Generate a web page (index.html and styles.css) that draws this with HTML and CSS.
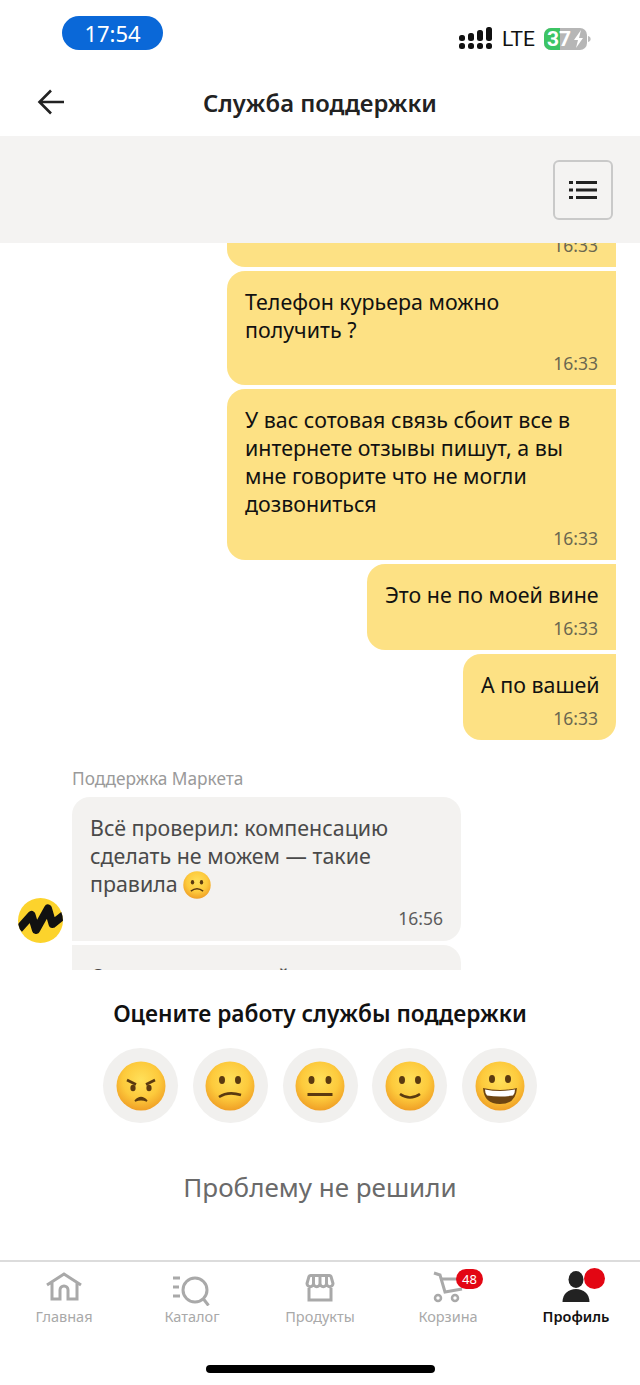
FILE: index.html
```html
<!DOCTYPE html>
<html lang="ru">
<head>
<meta charset="utf-8">
<title>Служба поддержки</title>
<link rel="stylesheet" href="styles.css">
</head>
<body>
<svg class="defs" width="0" height="0" aria-hidden="true">
  <defs>
    <radialGradient id="face" cx="50%" cy="38%" r="62%">
      <stop offset="0" stop-color="#ffe05a"/>
      <stop offset="0.6" stop-color="#fdca3c"/>
      <stop offset="1" stop-color="#f0a026"/>
    </radialGradient>
  </defs>
</svg>
<div class="app">
  <div class="status">
    <div class="time-pill">17:54</div>
    <div class="status-right">
      <svg class="signal" width="36" height="24" viewBox="0 0 36 24">
        <g fill="#111">
          <rect x="1" y="8" width="6" height="6" rx="2.5"/><rect x="1" y="16" width="6" height="6" rx="2.5"/>
          <rect x="10" y="6" width="6" height="8" rx="2.5"/><rect x="10" y="16" width="6" height="6" rx="2.5"/>
          <rect x="19" y="3" width="6" height="11" rx="2.5"/><rect x="19" y="16" width="6" height="6" rx="2.5"/>
          <rect x="28" y="0" width="6" height="14" rx="2.5"/><rect x="28" y="16" width="6" height="6" rx="2.5"/>
        </g>
      </svg>
      <span class="lte">LTE</span>
      <svg class="battery" width="47" height="24" viewBox="0 0 47 24">
        <rect x="0" y="1" width="43" height="22" rx="7" fill="#b6b6b6"/>
        <path d="M7 1h9v22H7a7 7 0 0 1-7-7V8a7 7 0 0 1 7-7z" fill="#3cc464"/>
        <path d="M44 9c2 .6 2.6 1.8 2.6 3s-.6 2.4-2.6 3z" fill="#bbb"/>
        <text class="batt-text" x="3" y="19">37</text>
        <path d="M37 3l-7 10h4l-2 8 7-10h-4z" fill="#fff"/>
      </svg>
    </div>
  </div>

  <header class="head">
    <svg class="back" width="28" height="26" viewBox="0 0 28 26"><path d="M14 1.5L2.5 13 14 24.5M3 13h24" fill="none" stroke="#222" stroke-width="2.6"/></svg>
    <h1 class="title">Служба поддержки</h1>
  </header>

  <div class="toolbar">
    <button class="menu-btn" type="button" aria-label="Меню">
      <svg width="28" height="20" viewBox="0 0 28 20"><g fill="#222"><rect x="0" y="1" width="4" height="3"/><rect x="7" y="1" width="21" height="3"/><rect x="0" y="8.5" width="4" height="3"/><rect x="7" y="8.5" width="21" height="3"/><rect x="0" y="16" width="4" height="3"/><rect x="7" y="16" width="21" height="3"/></g></svg>
    </button>
  </div>

  <main class="chat">
    <div class="bubble out out-cut"><div class="stamp">16:33</div></div>
    <div class="bubble out out-wide"><p class="text">Телефон курьера можно<br>получить ?</p><div class="stamp">16:33</div></div>
    <div class="bubble out out-wide out-tall"><p class="text">У вас сотовая связь сбоит все в<br>интернете отзывы пишут, а вы<br>мне говорите что не могли<br>дозвониться</p><div class="stamp">16:33</div></div>
    <div class="bubble out out-mid"><p class="text">Это не по моей вине</p><div class="stamp">16:33</div></div>
    <div class="bubble out out-last"><p class="text">А по вашей</p><div class="stamp">16:33</div></div>

    <div class="sender">Поддержка Маркета</div>
    <div class="row">
      <svg class="avatar" width="45" height="45" viewBox="0 0 45 45">
        <defs><clipPath id="avatar-clip"><circle cx="22.5" cy="22.5" r="22.5"/></clipPath></defs>
        <circle cx="22.5" cy="22.5" r="22.5" fill="#fcd32c"/>
        <path clip-path="url(#avatar-clip)" d="M1 31L13.500 17 18 32 30 10.500 34.500 26 46 17" fill="none" stroke="#111" stroke-width="8" stroke-linejoin="round"/>
      </svg>
      <div class="bubble in in-first"><p class="text">Всё проверил: компенсацию<br>сделать не можем — такие<br>правила <svg class="emoji-inline" width="28" height="28" viewBox="0 0 50 50"><circle cx="25" cy="25" r="24.5" fill="url(#face)"/><ellipse cx="17" cy="20" rx="3" ry="4" fill="#5b3a10"/><ellipse cx="33" cy="20" rx="3" ry="4" fill="#5b3a10"/><path d="M14 36q11-9 22 0" fill="none" stroke="#5b3a10" stroke-width="2.6"/></svg></p><div class="stamp">16:56</div></div>
    </div>
    <div class="row row-next">
      <div class="bubble in in-next"><p class="text">Очень неприятный</p></div>
    </div>
  </main>

  <section class="rate">
    <h2 class="rate-title">Оцените работу службы поддержки</h2>
    <div class="faces">
      <div class="face-btn"><svg width="50" height="50" viewBox="0 0 50 50"><circle cx="25" cy="25" r="24.5" fill="url(#face)"/><path d="M11 19l9 4.500M39 19l-9 4.500" stroke="#5b3a10" stroke-width="2.600" fill="none"/><ellipse cx="17" cy="27" rx="2.600" ry="3.200" fill="#5b3a10"/><ellipse cx="33" cy="27" rx="2.600" ry="3.200" fill="#5b3a10"/><path d="M19 40q6-7 12 0q-6-2.500-12 0z" fill="#5b3a10" stroke="#5b3a10" stroke-width="1.500"/></svg></div>
      <div class="face-btn"><svg width="50" height="50" viewBox="0 0 50 50"><circle cx="25" cy="25" r="24.5" fill="url(#face)"/><ellipse cx="17" cy="19" rx="3" ry="4" fill="#5b3a10"/><ellipse cx="33" cy="19" rx="3" ry="4" fill="#5b3a10"/><path d="M14 36q9-6 22-2" fill="none" stroke="#5b3a10" stroke-width="2.6"/></svg></div>
      <div class="face-btn"><svg width="50" height="50" viewBox="0 0 50 50"><circle cx="25" cy="25" r="24.5" fill="url(#face)"/><ellipse cx="16.500" cy="19" rx="3" ry="4" fill="#5b3a10"/><ellipse cx="33.500" cy="19" rx="3" ry="4" fill="#5b3a10"/><rect x="12.500" y="32" width="25" height="3" fill="#5b3a10"/></svg></div>
      <div class="face-btn"><svg width="50" height="50" viewBox="0 0 50 50"><circle cx="25" cy="25" r="24.500" fill="url(#face)"/><ellipse cx="17" cy="19" rx="3" ry="4" fill="#5b3a10"/><ellipse cx="33" cy="19" rx="3" ry="4" fill="#5b3a10"/><path d="M15 33q10 7 20 0" fill="none" stroke="#5b3a10" stroke-width="2.6"/></svg></div>
      <div class="face-btn"><svg width="50" height="50" viewBox="0 0 50 50"><circle cx="25" cy="25" r="24.5" fill="url(#face)"/><ellipse cx="17" cy="18" rx="3" ry="4" fill="#5b3a10"/><ellipse cx="33" cy="18" rx="3" ry="4" fill="#5b3a10"/><path d="M8 27q17 4 34 0q-1 16-17 16T8 27z" fill="#6e4512"/><path d="M10 28.500q15 3 30 0q0 4-2 6q-13 2-26 0q-2-2-2-6z" fill="#fff"/></svg></div>
    </div>
    <div class="rate-action">Проблему не решили</div>
  </section>

  <nav class="tabs">
    <a class="tab">
      <svg width="44" height="36" viewBox="0 0 44 36"><path d="M5 15L22 4l17 11M10 12v17h8V20a4 4 0 0 1 8 0v9h9V12" fill="none" stroke="#a9a9a9" stroke-width="3"/></svg>
      <span class="tab-label">Главная</span>
    </a>
    <a class="tab">
      <svg width="44" height="36" viewBox="0 0 44 36"><g fill="none" stroke="#a9a9a9" stroke-width="3"><path d="M3 8h7M3 17h6M3 26h7"/><circle cx="25" cy="20" r="12"/><path d="M33.500 29l5 6.500"/></g></svg>
      <span class="tab-label">Каталог</span>
    </a>
    <a class="tab">
      <svg width="44" height="36" viewBox="0 0 44 36"><g fill="none" stroke="#a9a9a9" stroke-width="3"><path d="M11 18v12h22V18"/><path d="M12.500 5.500h19q1 0 1.500 1l2 7a3.250 3.250 0 0 1-6.500 0a3.250 3.250 0 0 1-6.500 0a3.250 3.250 0 0 1-6.500 0a3.250 3.250 0 0 1-6.500 0l2-7q.5-1 1.500-1zM15.500 5.500v8M22 5.500v8M28.500 5.500v8" stroke-linejoin="round"/></g></svg>
      <span class="tab-label">Продукты</span>
    </a>
    <a class="tab">
      <svg width="44" height="36" viewBox="0 0 44 36"><g fill="none" stroke="#a9a9a9"><path d="M8 3l6 2 5 17 17-3" stroke-width="3"/><path d="M14 9h20" stroke-width="3"/><circle cx="12" cy="28" r="3" stroke-width="2.500"/><circle cx="29" cy="28" r="3" stroke-width="2.500"/></g></svg>
      <span class="tab-label">Корзина</span>
      <span class="count">48</span>
    </a>
    <a class="tab tab-active">
      <svg width="44" height="36" viewBox="0 0 44 36"><ellipse cx="22" cy="9.500" rx="7.500" ry="8.500" fill="#222"/><path d="M8.500 32c0-8 6-13 13.500-13s13.500 5 13.500 13z" fill="#222"/></svg>
      <span class="tab-label">Профиль</span>
      <span class="dot"></span>
    </a>
  </nav>

  <div class="home-bar"><span class="home-indicator"></span></div>
</div>
</body>
</html>
```

FILE: styles.css
```css
* { box-sizing: border-box; }
html, body { margin: 0; padding: 0; }
body { background: #fff; font-family: "Noto Sans", "Open Sans", sans-serif; color: #111; }
.defs { position: absolute; }
.app { width: 640px; height: 1385px; display: flex; flex-direction: column; overflow: hidden; }

.status { height: 68px; padding: 16px 49px 0 62px; display: flex; justify-content: space-between; align-items: flex-start; }
.time-pill { width: 101px; height: 34px; border-radius: 17px; background: #0a68d8; color: #fff; font-size: 22px; line-height: 34px; text-align: center; }
.status-right { display: flex; align-items: center; gap: 8px; margin-top: 10px; height: 26px; }
.lte { font-size: 21px; line-height: 26px; color: #111; font-family: "Roboto", sans-serif; }
.battery { margin-left: 1px; }
.batt-text { font-family: "Roboto", sans-serif; font-size: 21px; font-weight: 700; fill: #fff; }

.head { height: 68px; position: relative; display: flex; align-items: center; justify-content: center; padding-top: 1px; }
.back { position: absolute; left: 37px; top: 21px; }
.title { margin: 0; font-size: 23.800px; font-weight: 600; color: #222; line-height: 30px; }

.toolbar { height: 107px; background: #f4f3f2; padding: 24px 27px 0 0; display: flex; justify-content: flex-end; align-items: flex-start; }
.menu-btn { width: 60px; height: 60px; border: 2px solid #c9c9c9; border-radius: 6px; background: #f4f3f2; padding: 0; display: flex; align-items: center; justify-content: center; }

.chat { height: 727px; overflow: hidden; display: flex; flex-direction: column; align-items: flex-start; flex: none; }
.bubble { padding: 17px 18px 11px; }
.out { align-self: flex-end; margin: 0 24px 4px 0; background: #fde184; border-radius: 18px 0 0 18px; color: #111; }
.out-cut { width: 389px; height: 33px; margin-top: -9px; padding-top: 0; border-radius: 0 0 0 18px; }
.out-cut .stamp { margin-top: 0; }
.out-wide { width: 389px; }
.out-tall .stamp { margin-top: 9px; }
.out-mid { width: 249px; }
.out-last { width: 153px; border-radius: 18px 0 18px 18px; margin-bottom: 0; }
.text { margin: 0; font-size: 21.400px; line-height: 28px; white-space: nowrap; }
.stamp { margin-top: 8px; font-size: 17.500px; line-height: 22px; text-align: right; color: #6a6750; }

.sender { margin: 28px 0 7px 72px; font-size: 17.300px; line-height: 22px; color: #9a9a9a; }
.row { display: flex; gap: 9px; padding-left: 18px; align-items: flex-end; }
.row-next { padding-left: 72px; margin-top: 4px; }
.avatar { flex: none; margin-bottom: -2px; }
.in { width: 389px; background: #f3f2f0; color: #4a4a4a; padding-top: 17px; }
.in-first { border-radius: 18px 18px 18px 0; padding-bottom: 12px; }
.in-next { border-radius: 0 18px 18px 0; height: 60px; padding-top: 18px; }
.in .stamp { color: #5c5c5c; }
.emoji-inline { vertical-align: -7px; }

.rate { height: 290px; padding-top: 29px; display: flex; flex-direction: column; align-items: center; }
.rate-title { margin: 0; font-size: 22.700px; line-height: 30px; font-weight: 600; color: #111; }
.faces { margin-top: 19px; display: flex; gap: 14.750px; }
.face-btn { width: 75px; height: 75px; border-radius: 50%; background: #f1f0ee; display: flex; align-items: center; justify-content: center; }
.rate-action { margin-top: 47px; font-size: 26px; line-height: 34px; color: #6a6a6a; }

.tabs { height: 86px; border-top: 2px solid #dcdcdc; padding-top: 8px; display: grid; grid-template-columns: repeat(5, 128px); flex: none; }
.tab { position: relative; display: flex; flex-direction: column; align-items: center; height: 56px; }
.tab svg { display: block; }
.tab-label { font-size: 14.500px; line-height: 20px; color: #a9a9a9; }
.tab-active .tab-label { color: #111; font-weight: 600; }
.count { position: absolute; left: 72px; top: -1px; width: 27px; height: 20px; border-radius: 10px; background: #e30613; color: #fff; font-size: 13px; line-height: 20px; text-align: center; }
.dot { position: absolute; left: 72px; top: -2px; width: 21px; height: 21px; border-radius: 50%; background: #e30613; }

.home-bar { flex: 1; display: flex; justify-content: center; padding-top: 19px; }
.home-indicator { width: 229px; height: 8px; border-radius: 4px; background: #000; }
```
